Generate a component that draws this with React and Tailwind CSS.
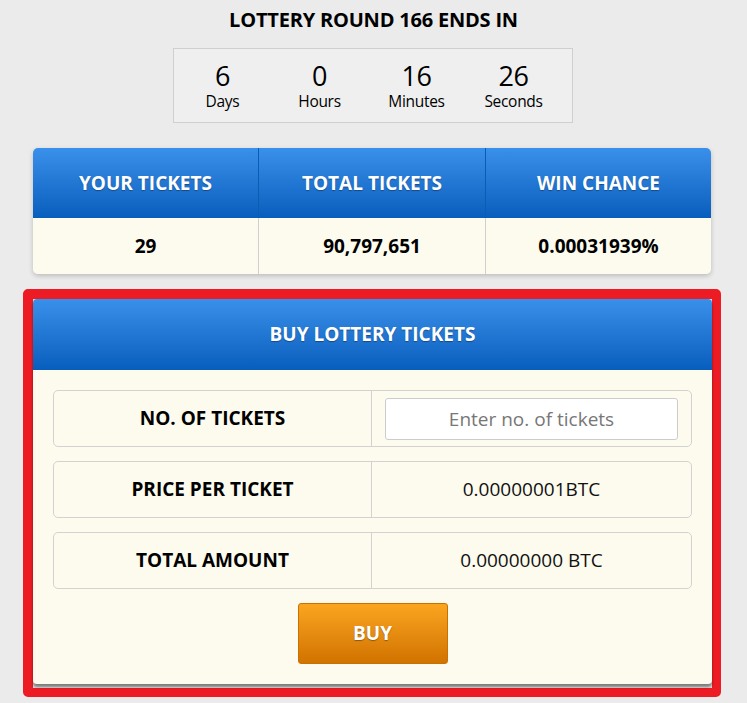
const countdown = [
  { value: "6", label: "Days" },
  { value: "0", label: "Hours" },
  { value: "16", label: "Minutes" },
  { value: "26", label: "Seconds" },
];

const stats = [
  { label: "YOUR TICKETS", value: "29" },
  { label: "TOTAL TICKETS", value: "90,797,651" },
  { label: "WIN CHANCE", value: "0.00031939%" },
];

const blueHead =
  "bg-gradient-to-b from-[#3990ea] to-[#065ebd] text-white font-bold text-[19px] [text-shadow:0_1px_1px_rgba(0,0,0,0.35)]";

function Row({ label, children }) {
  return (
    <div className="flex h-[57px] rounded-[5px] border border-[#d2d2d2]">
      <div className="flex w-[318px] items-center justify-center border-r border-[#d2d2d2] text-[19px] font-bold text-black">
        {label}
      </div>
      <div className="flex flex-1 items-center justify-center text-[19px] text-[#111]">
        {children}
      </div>
    </div>
  );
}

export default function App() {
  return (
    <div
      className="min-h-[703px] bg-[#ebebeb] pt-[7px] text-black"
      style={{ fontFamily: '"Open Sans", "Liberation Sans", sans-serif' }}
    >
      <h1 className="text-center text-[20px] font-bold leading-[26px] tracking-[-0.2px]">
        LOTTERY ROUND 166 ENDS IN
      </h1>

      <div className="ml-[173px] mt-[15px] flex h-[75px] w-[400px] border border-[#cfcfcf] bg-[#efefef]">
        {countdown.map((c) => (
          <div key={c.label} className="flex w-[97px] flex-col items-center pt-[13px]">
            <span className="text-[27px] leading-[28px] tracking-[-0.5px]">{c.value}</span>
            <span className="text-[15.5px] leading-[22px] tracking-[-0.3px]">{c.label}</span>
          </div>
        ))}
      </div>

      <div className="ml-[33px] mt-[25px] w-[678px] overflow-hidden rounded-[5px] shadow-[0_2px_5px_rgba(0,0,0,0.2)]">
        <div className="flex h-[70px]">
          {stats.map((s, i) => (
            <div
              key={s.label}
              className={`flex items-center justify-center ${blueHead} ${i === 1 ? "w-[228px] border-x border-[#0b5cb3]" : "flex-1"}`}
            >
              {s.label}
            </div>
          ))}
        </div>
        <div className="flex h-[56px] bg-[#fdfbee]">
          {stats.map((s, i) => (
            <div
              key={s.label}
              className={`flex items-center justify-center text-[19px] font-bold ${i === 1 ? "w-[228px] border-x border-[#d0d0d0]" : "flex-1"}`}
            >
              {s.value}
            </div>
          ))}
        </div>
      </div>

      <div className="ml-[23px] mt-[15px] w-[698px] rounded-[5px] border-[10px] border-b-[9px] border-r-[9px] border-[#ed1c24] bg-[#e0e0e0]">
        <div className="mb-[4px] overflow-hidden rounded-[4px] bg-[#fdfbee] shadow-[0_3px_3px_rgba(0,0,0,0.45)]">
          <div className={`flex h-[71px] items-center justify-center ${blueHead}`}>
            BUY LOTTERY TICKETS
          </div>
          <div className="flex flex-col gap-[14px] px-[20px] pt-[20px]">
            <Row label="NO. OF TICKETS">
              <input
                type="text"
                placeholder="Enter no. of tickets"
                className="h-[42px] w-[293px] rounded-[3px] border border-[#cccccc] bg-white text-center text-[19px] text-[#333] placeholder:text-[#777] outline-none"
              />
            </Row>
            <Row label="PRICE PER TICKET">0.00000001BTC</Row>
            <Row label="TOTAL AMOUNT">0.00000000 BTC</Row>
          </div>
          <div className="flex justify-center pb-[20px] pt-[14px]">
            <button className="h-[61px] w-[150px] rounded-[3px] border border-[#c97000] bg-gradient-to-b from-[#fba51f] to-[#d17300] text-[19px] font-bold text-white [text-shadow:0_1px_1px_rgba(0,0,0,0.35)]">
              BUY
            </button>
          </div>
        </div>
      </div>
    </div>
  );
}
